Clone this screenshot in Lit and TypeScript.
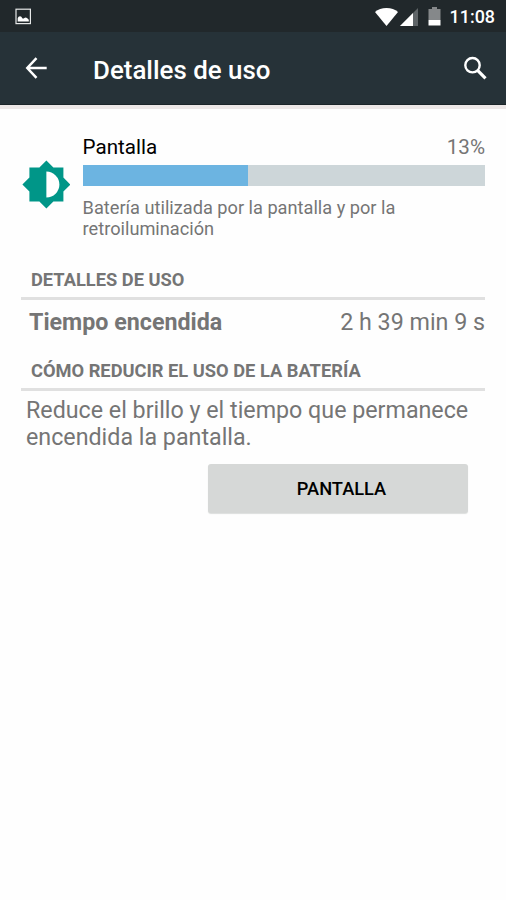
import { LitElement, html, css } from "lit";
import { customElement, property } from "lit/decorators.js";

@customElement("status-bar")
class StatusBar extends LitElement {
  static styles = css`
    :host {
      display: flex;
      align-items: center;
      box-sizing: border-box;
      height: 32px;
      padding: 0 11px 0 15px;
      background: #21282b;
      color: #fff;
    }
    svg { display: block; flex: none; }
    .spacer { flex: 1; }
    .wifi { margin: 1px 2px 0 0; }
    .signal { margin: 1px 10px 0 0; }
    .battery { margin-right: 9px; }
    .clock {
      font-size: 17.9px;
      font-weight: 500;
      line-height: 22px;
      padding-top: 2px;
    }
  `;

  render() {
    return html`
      <svg width="17" height="17" viewBox="0 0 17 17">
        <rect x="1" y="1.2" width="14.4" height="14.4" fill="none" stroke="#e6e8e8" stroke-width="1.2" />
        <path d="M2.700 13.600V10.200Q3.300 8.400 5 8.300Q6.600 8.400 7.300 10.200Q8.500 10.800 9.300 9.900Q10.800 8.800 12 10.100L13.800 11.700V13.600Z" fill="#fff" />
      </svg>
      <span class="spacer"></span>
      <svg class="wifi" width="23" height="18" viewBox="0 0 23 18">
        <path d="M0 4Q4.500 0 11.500 0T23 4L11.500 18Z" fill="#fff" />
      </svg>
      <svg class="signal" width="18" height="18" viewBox="0 0 18 18">
        <path d="M18 0V18H0Z" fill="#5e6467" />
        <path d="M13 5V18H0Z" fill="#fff" />
      </svg>
      <svg class="battery" width="13" height="19" viewBox="0 0 13 19">
        <path d="M4 0H9V2H12.500V13H.5V2H4Z" fill="#85888a" />
        <path d="M.5 13H12.500V18.500H.5Z" fill="#fff" />
      </svg>
      <span class="clock">11:08</span>
    `;
  }
}

@customElement("title-bar")
class TitleBar extends LitElement {
  static styles = css`
    :host {
      display: flex;
      align-items: center;
      box-sizing: border-box;
      height: 73px;
      padding: 0 19px 0 25px;
      background: #263238;
      border-bottom: 1px solid #1b2529;
      color: #fff;
      box-shadow: 0 4px 0 #ece7e7;
    }
    svg { display: block; flex: none; }
    h1 {
      flex: 1;
      margin: 3px 0 0 45px;
      font-size: 25.9px;
      font-weight: 500;
      line-height: 30px;
    }
  `;

  render() {
    return html`
      <svg width="23" height="22" viewBox="0 0 23 22">
        <path d="M11.500 1.200L2.300 11L11.500 20.800M2.300 11H21.700" fill="none" stroke="#fff" stroke-width="2.500" />
      </svg>
      <h1>Detalles de uso</h1>
      <svg width="24" height="24" viewBox="0 0 24 24">
        <circle cx="9.500" cy="9.200" r="7.200" fill="none" stroke="#fff" stroke-width="2.400" />
        <path d="M14.600 14.400L22.500 22.300" stroke="#fff" stroke-width="3.200" />
      </svg>
    `;
  }
}

@customElement("usage-summary")
class UsageSummary extends LitElement {
  @property() name = "";
  @property() percent = "";
  @property() description = "";
  @property({ type: Number }) fill = 0;

  static styles = css`
    :host {
      display: flex;
      align-items: flex-start;
      padding-left: 1px;
    }
    svg { display: block; flex: none; margin: 25px 12px 0 0; }
    .body { flex: 1; padding-left: .6px; }
    .row {
      display: flex;
      justify-content: space-between;
      font-size: 20.6px;
      line-height: 24px;
    }
    .name { color: #000; }
    .track {
      height: 21px;
      margin-top: 6px;
      background: #cdd6d9;
    }
    .level { height: 100%; background: #6cb4e1; }
    p {
      margin: 10.500px 60px 0 0;
      font-size: 18.2px;
      line-height: 21.500px;
    }
  `;

  render() {
    return html`
      <svg width="48" height="49" viewBox="-.4 -.6 48 49">
        <path d="M24 0L31 7H41V17L48 24L41 31V41H31L24 48L17 41H7V31L0 24L7 17V7H17Z" fill="#009688" />
        <path d="M24 11A13 13 0 0 1 24 37Z" fill="#fff" />
      </svg>
      <div class="body">
        <div class="row">
          <span class="name">${this.name}</span>
          <span>${this.percent}</span>
        </div>
        <div class="track"><div class="level" style="width:${this.fill}%"></div></div>
        <p>${this.description}</p>
      </div>
    `;
  }
}

@customElement("app-root")
class AppRoot extends LitElement {
  static styles = css`
    :host {
      display: block;
      min-height: 900px;
      background: #fefefe;
      font-family: Roboto, "Liberation Sans", sans-serif;
      color: #757575;
    }
    main {
      display: flex;
      flex-direction: column;
      padding: 30px 21px 0;
    }
    h2 {
      margin: 0;
      padding: 0 0 6px 10px;
      border-bottom: 3px solid #e0e0e0;
      font-size: 18.280px;
      font-weight: 700;
      line-height: 22px;
    }
    .first { margin-top: 29px; }
    .second { margin-top: 24px; }
    .detail {
      display: flex;
      justify-content: space-between;
      margin-top: 8px;
      padding-left: 8px;
      font-size: 23.250px;
      line-height: 28px;
    }
    .label { font-weight: 700; }
    .tip {
      margin: 6px 0 0;
      padding: 0 10px 0 5px;
      font-size: 23.250px;
      line-height: 27px;
    }
    button {
      align-self: flex-end;
      width: 260px;
      height: 49px;
      margin: 13px 17.500px 0 0;
      padding: 2px 0 0 8px;
      border: 0;
      border-radius: 3px;
      background: #d6d8d7;
      box-shadow: 0 1px 1px #dcdedd;
      font: 500 18.250px/22px Roboto, "Liberation Sans", sans-serif;
      color: #000;
    }
  `;

  render() {
    return html`
      <status-bar></status-bar>
      <title-bar></title-bar>
      <main>
        <usage-summary
          name="Pantalla"
          percent="13%"
          fill="41"
          description="Batería utilizada por la pantalla y por la retroiluminación"
        ></usage-summary>
        <h2 class="first">DETALLES DE USO</h2>
        <div class="detail">
          <span class="label">Tiempo encendida</span>
          <span>2 h 39 min 9 s</span>
        </div>
        <h2 class="second">CÓMO REDUCIR EL USO DE LA BATERÍA</h2>
        <p class="tip">Reduce el brillo y el tiempo que permanece encendida la pantalla.</p>
        <button>PANTALLA</button>
      </main>
    `;
  }
}
